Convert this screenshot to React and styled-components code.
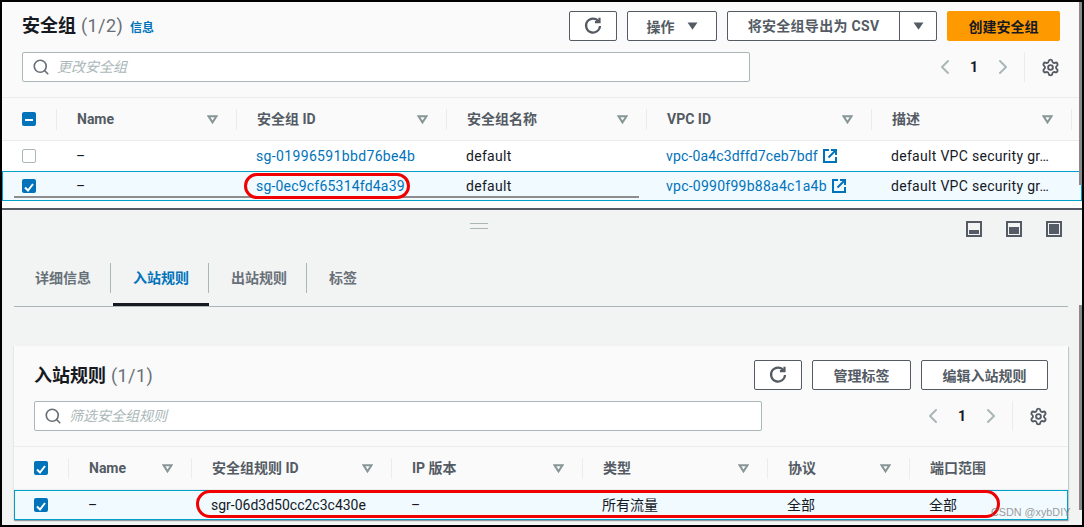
import React from "react";
import styled, { createGlobalStyle } from "styled-components";
import { ChevronLeft, ChevronRight, Search, Settings } from "lucide-react";

const GlobalStyle = createGlobalStyle`
  html, body { margin: 0; padding: 0; background: #fff; }
  body {
    font-family: "Roboto", "Noto Sans CJK SC", sans-serif;
    font-size: 14px;
    line-height: 20px;
    color: #16191f;
  }
`;

const Frame = styled.div`
  position: relative;
  box-sizing: border-box;
  width: 1084px;
  height: 527px;
  border: 2px solid #000;
  background: #f2f3f3;
  overflow: hidden;
`;

const TopPanel = styled.section`
  height: 208px;
  box-sizing: border-box;
  background: #fff;
  border-bottom: 2px solid #545b64;
`;

const PanelHead = styled.div`
  background: #fafafa;
  padding: ${(p) => p.$pad};
  display: flex;
  flex-direction: column;
  gap: 11px;
`;

const HeadRow = styled.div`
  display: flex;
  align-items: center;
  height: 30px;
  gap: 10px;
`;

const Title = styled.h2`
  margin: 0;
  padding-top: ${(p) => p.$top}px;
  font-size: 18px;
  font-weight: 700;
  color: #16191f;
  margin-right: auto;
  display: flex;
  align-items: baseline;
  gap: 5px;
`;

const Count = styled.span`
  font-size: 18px;
  font-weight: 400;
  color: #687078;
  letter-spacing: 0.4px;
`;

const Info = styled.a`
  font-size: 12px;
  font-weight: 700;
  color: #0073bb;
  margin-left: 2px;
`;

const Button = styled.button`
  box-sizing: border-box;
  height: 30px;
  width: ${(p) => p.$w}px;
  padding: 0 0 1px;
  display: flex;
  align-items: center;
  justify-content: center;
  gap: ${(p) => p.$gap || 0}px;
  font: 700 14px "Roboto", "Noto Sans CJK SC", sans-serif;
  color: #545b64;
  background: #fff;
  border: 1px solid #545b64;
  border-radius: 2px;
`;

const SplitButton = styled.div`
  display: flex;
  box-sizing: border-box;
  height: 30px;
  border: 1px solid #545b64;
  border-radius: 2px;
  background: #fff;
`;

const SplitPart = styled.span`
  box-sizing: border-box;
  display: flex;
  align-items: center;
  justify-content: center;
  width: ${(p) => p.$w}px;
  padding-bottom: 1px;
  font-weight: 700;
  color: #545b64;
  letter-spacing: 0.3px;
  & + & { border-left: 1px solid #545b64; }
`;

const PrimaryButton = styled.button`
  width: 113px;
  height: 30px;
  padding: 0 0 1px;
  font: 700 14px "Roboto", "Noto Sans CJK SC", sans-serif;
  color: #16191f;
  background: #ff9900;
  border: 0;
  border-radius: 2px;
`;

const SearchBox = styled.div`
  box-sizing: border-box;
  width: 728px;
  height: 30px;
  display: flex;
  align-items: center;
  gap: 7px;
  padding-left: 9px;
  background: #fff;
  border: 1px solid #aab7b8;
  border-radius: 2px;
  color: #687078;
`;

const Placeholder = styled.span`
  font-style: italic;
  font-size: 14px;
  color: #aab7b8;
`;

const Pager = styled.div`
  margin-left: auto;
  display: flex;
  align-items: center;
  height: 30px;
  color: #aab7b8;
`;

const PageNum = styled.span`
  width: 34px;
  text-align: center;
  font-weight: 700;
  color: #16191f;
`;

const PagerGear = styled.span`
  display: flex;
  align-items: center;
  height: 30px;
  margin-left: 9px;
  padding-left: 16px;
  border-left: 1px solid #eaeded;
  color: #545b64;
`;

const HeaderRow = styled.div`
  display: grid;
  grid-template-columns: ${(p) => p.$cols};
  align-items: center;
  box-sizing: border-box;
  height: 44px;
  background: #fafafa;
  border-top: 1px solid #eaeded;
  border-bottom: 1px solid #eaeded;
`;

const HeadCell = styled.div`
  box-sizing: border-box;
  height: 21px;
  display: flex;
  align-items: center;
  justify-content: space-between;
  padding: 0 18px 0 20px;
  border-left: 1px solid #eaeded;
  font-weight: 700;
  color: #545b64;
`;

const CheckCell = styled.div`
  display: flex;
  align-items: center;
  padding-left: 20px;
`;

const BodyRow = styled.div`
  display: grid;
  grid-template-columns: ${(p) => p.$cols};
  align-items: center;
  height: 30px;
  background: ${(p) => (p.$selected ? "#f1faff" : "#fff")};
  box-shadow: ${(p) => (p.$selected ? "inset 0 0 0 1px #00a1c9" : "none")};
`;

const Cell = styled.div`
  padding-left: 20px;
  display: flex;
  align-items: center;
  gap: 5px;
  white-space: nowrap;
  overflow: hidden;
  font-size: 14px;
  letter-spacing: ${(p) => p.$track || 0}px;
`;

const Link = styled.a`
  color: #0073bb;
`;

const Check = styled.span`
  box-sizing: border-box;
  width: 14px;
  height: 14px;
  display: block;
  border-radius: 2px;
  background: ${(p) => (p.$on ? "#0073bb" : "#fff")};
  border: ${(p) => (p.$on ? "0" : "1px solid #aab7b8")};
`;

const Toolbar = styled.div`
  height: 37px;
  display: flex;
  align-items: center;
  padding-left: 468px;
  padding-right: 20px;
`;

const Handle = styled.span`
  width: 18px;
  height: 4px;
  border-top: 1px solid #aab7b8;
  border-bottom: 1px solid #aab7b8;
  margin: -5px auto 0 0;
`;

const ViewIcons = styled.div`
  display: flex;
  gap: 24px;
  color: #545b64;
`;

const Tabs = styled.nav`
  margin: 5px 14px 0 12px;
  display: flex;
  height: 55px;
  box-sizing: border-box;
  border-bottom: 1px solid #aab7b8;
`;

const Tab = styled.div`
  position: relative;
  padding-top: 11px;
  width: ${(p) => p.$w}px;
  &::after {
    content: "";
    display: ${(p) => (p.$active ? "block" : "none")};
    position: absolute;
    left: 2px;
    right: 0;
    bottom: 0;
    height: 3px;
    background: #16191f;
  }
`;

const TabLabel = styled.div`
  height: 30px;
  line-height: 30px;
  padding-left: ${(p) => p.$pad}px;
  font-weight: 700;
  color: ${(p) => (p.$active ? "#0073bb" : "#687078")};
  border-right: ${(p) => (p.$last ? "0" : "1px solid #aab7b8")};
`;

const Card = styled.section`
  margin: 39px 14px 0 12px;
  background: #fff;
  box-shadow: 0 1px 1px rgba(0, 28, 36, 0.3), 1px 1px 1px rgba(0, 28, 36, 0.15);
`;

const Oval = styled.div`
  position: absolute;
  box-sizing: border-box;
  left: ${(p) => p.$x}px;
  top: ${(p) => p.$y}px;
  width: ${(p) => p.$w}px;
  height: ${(p) => p.$h}px;
  border: 3px solid #f00000;
  border-radius: 14px;
`;

const RowUnderline = styled.div`
  position: absolute;
  left: 12px;
  top: 194px;
  width: 625px;
  height: 2px;
  background: #8d8d8d;
`;

const Scrollbar = styled.div`
  position: absolute;
  right: 0;
  width: 3px;
  top: ${(p) => p.$top}px;
  height: ${(p) => p.$h}px;
  background: #8a8a8a;
`;

const Watermark = styled.div`
  position: absolute;
  left: 989px;
  top: 503px;
  font: 10.8px/14px "Liberation Sans", sans-serif;
  color: rgba(110, 110, 110, 0.7);
  white-space: nowrap;
`;

const CheckMark = ({ on, dash }) => (
  <Check $on={on}>
    {on && (
      <svg width="14" height="14" viewBox="0 0 14 14" fill="none" stroke="#fff" strokeWidth="2">
        {dash ? <path d="M3 7h8" /> : <path d="M3 7.5l3 3 5-6.5" />}
      </svg>
    )}
  </Check>
);

const FilterTri = () => (
  <svg width="11" height="9" viewBox="0 0 11 9" fill="none" stroke="#879596" strokeWidth="2">
    <path d="M1.5 1.2h8L5.5 7.4z" />
  </svg>
);

const Caret = () => (
  <svg width="11" height="8" viewBox="0 0 11 8" fill="#545b64">
    <path d="M0.5 0.5h10L5.5 7.8z" />
  </svg>
);

const Refresh = () => (
  <svg width="18" height="18" viewBox="0 0 18 18" fill="none" stroke="#545b64" strokeWidth="2.2">
    <path d="M14.5 4.2A7 7 0 1 0 16 9" />
    <path d="M15.5 0.8v4.4h-4.6" />
  </svg>
);

const External = () => (
  <svg width="14" height="14" viewBox="0 0 14 14" fill="none" stroke="#0073bb" strokeWidth="2">
    <path d="M6 1H1v12h12V8" />
    <path d="M5.5 8.5L12.5 1.5M8 1h5v5" />
  </svg>
);

const ViewIcon = ({ fill }) => (
  <svg width="16" height="16" viewBox="0 0 16 16">
    <rect x="1" y="1" width="14" height="14" fill="#f2f3f3" stroke="#545b64" strokeWidth="2" />
    <rect x="3" y={13 - fill} width="10" height={fill} fill="#545b64" />
  </svg>
);

const PagerControls = () => (
  <Pager>
    <ChevronLeft size={24} strokeWidth={2} />
    <PageNum>1</PageNum>
    <ChevronRight size={24} strokeWidth={2} />
    <PagerGear><Settings size={19} strokeWidth={2.4} /></PagerGear>
  </Pager>
);

const topCols = "54px 180px 210px 200px 225px 200px 1fr";
const bottomCols = "54px 123px 200px 191px 185px 142px 1fr";

const topHeads = ["Name", "安全组 ID", "安全组名称", "VPC ID", "描述"];
const bottomHeads = ["Name", "安全组规则 ID", "IP 版本", "类型", "协议"];

// track = letter spacing that brings each id to the width it has in the console font
const groups = [
  { id: "sg-01996591bbd76be4b", idTrack: 0.35, vpc: "vpc-0a4c3dffd7ceb7bdf", vpcTrack: 0.15, selected: false },
  { id: "sg-0ec9cf65314fd4a39", idTrack: 0.2, vpc: "vpc-0990f99b88a4c1a4b", vpcTrack: 0.25, selected: true },
];

export default function App() {
  return (
    <Frame>
      <GlobalStyle />
      <TopPanel>
        <PanelHead $pad="9px 22px 15px 20px">
          <HeadRow>
            <Title $top={2}>
              安全组 <Count>(1/2)</Count> <Info>信息</Info>
            </Title>
            <Button $w={48}><Refresh /></Button>
            <Button $w={90} $gap={12}>操作 <Caret /></Button>
            <SplitButton>
              <SplitPart $w={171}>将安全组导出为 CSV</SplitPart>
              <SplitPart $w={37}><Caret /></SplitPart>
            </SplitButton>
            <PrimaryButton>创建安全组</PrimaryButton>
          </HeadRow>
          <HeadRow>
            <SearchBox>
              <Search size={18} strokeWidth={2.2} />
              <Placeholder>更改安全组</Placeholder>
            </SearchBox>
            <PagerControls />
          </HeadRow>
        </PanelHead>
        <HeaderRow $cols={topCols}>
          <CheckCell><CheckMark on dash /></CheckCell>
          {topHeads.map((h) => (
            <HeadCell key={h}>{h}<FilterTri /></HeadCell>
          ))}
          <HeadCell />
        </HeaderRow>
        {groups.map((g) => (
          <BodyRow key={g.id} $cols={topCols} $selected={g.selected}>
            <CheckCell><CheckMark on={g.selected} /></CheckCell>
            <Cell>–</Cell>
            <Cell $track={g.idTrack}><Link>{g.id}</Link></Cell>
            <Cell $track={0.3}>default</Cell>
            <Cell $track={g.vpcTrack}><Link>{g.vpc}</Link><External /></Cell>
            <Cell $track={0.3}>default VPC security gr…</Cell>
          </BodyRow>
        ))}
      </TopPanel>

      <Toolbar>
        <Handle />
        <ViewIcons>
          <ViewIcon fill={4} />
          <ViewIcon fill={7} />
          <ViewIcon fill={10} />
        </ViewIcons>
      </Toolbar>

      <Tabs>
        <Tab $w={97}><TabLabel $pad={21}>详细信息</TabLabel></Tab>
        <Tab $w={98} $active><TabLabel $pad={22} $active>入站规则</TabLabel></Tab>
        <Tab $w={98}><TabLabel $pad={22}>出站规则</TabLabel></Tab>
        <Tab $w={98}><TabLabel $pad={22} $last>标签</TabLabel></Tab>
      </Tabs>

      <Card>
        <PanelHead $pad="14px 20px 15px 20px">
          <HeadRow>
            <Title $top={1}>
              入站规则 <Count>(1/1)</Count>
            </Title>
            <Button $w={48}><Refresh /></Button>
            <Button $w={99}>管理标签</Button>
            <Button $w={127}>编辑入站规则</Button>
          </HeadRow>
          <HeadRow>
            <SearchBox>
              <Search size={18} strokeWidth={2.2} />
              <Placeholder>筛选安全组规则</Placeholder>
            </SearchBox>
            <PagerControls />
          </HeadRow>
        </PanelHead>
        <HeaderRow $cols={bottomCols}>
          <CheckCell><CheckMark on /></CheckCell>
          {bottomHeads.map((h) => (
            <HeadCell key={h}>{h}<FilterTri /></HeadCell>
          ))}
          <HeadCell>端口范围</HeadCell>
        </HeaderRow>
        <BodyRow $cols={bottomCols} $selected>
          <CheckCell><CheckMark on /></CheckCell>
          <Cell>–</Cell>
          <Cell>sgr-06d3d50cc2c3c430e</Cell>
          <Cell>–</Cell>
          <Cell>所有流量</Cell>
          <Cell>全部</Cell>
          <Cell>全部</Cell>
        </BodyRow>
      </Card>

      <RowUnderline />
      <Oval $x={242} $y={171} $w={166} $h={26} />
      <Oval $x={194} $y={488} $w={804} $h={28} />
      <Scrollbar $top={0} $h={183} />
      <Scrollbar $top={303} $h={205} />
      <Watermark>CSDN @xybDIY</Watermark>
    </Frame>
  );
}
